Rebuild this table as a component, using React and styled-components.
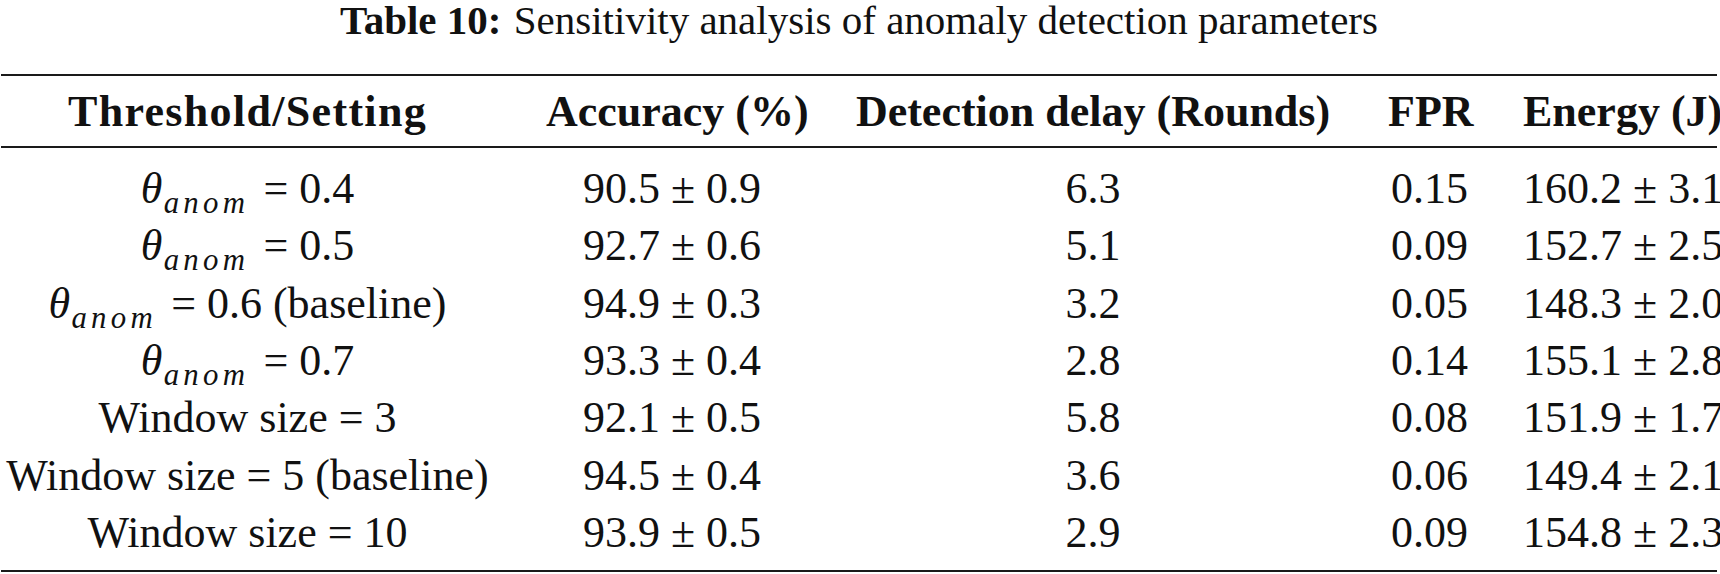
import styled, { createGlobalStyle } from 'styled-components'

const GlobalStyle = createGlobalStyle`
    html, body {
        margin: 0;
        padding: 0;
        background: #ffffff;
    }

    body {
        font-family: "Liberation Serif", "DejaVu Serif", serif;
        color: #111111;
    }
`

const Page = styled.div`
    width: 1716px;
    margin-left: 1px;
`

const Caption = styled.p`
    margin: 0 0 34px;
    height: 40px;
    line-height: 40px;
    font-size: 41px;
    text-align: center;
    white-space: nowrap;
`

const CaptionLabel = styled.span`
    font-weight: 700;
    margin-right: 0.3em;
`

const Head = styled.div`
    display: grid;
    grid-template-columns: 519px 304px 538px 135px 220px;
    height: 70px;
    align-items: center;
    border-top: 2px solid #1a1a1a;
    border-bottom: 2px solid #1a1a1a;
    font-size: 44px;
    font-weight: 700;
`

const Body = styled.div`
    padding: 12px 0 9px;
    border-bottom: 2px solid #1a1a1a;
`

const Row = styled.div`
    display: grid;
    grid-template-columns: 519px 304px 538px 135px 220px;
    height: 57.3px;
    align-items: center;
    font-size: 44px;
`

const Cell = styled.div`
    text-align: center;
    white-space: nowrap;
    line-height: 57px;
    letter-spacing: ${({ $wide }) => ($wide ? '0.03em' : 'normal')};
    padding: ${({ $first, $last }) => ($first ? '0 26px 0 0' : $last ? '0 3px 0 26px' : '0 26px')};
`

const Theta = styled.i`
    font-style: italic;
`

const Sub = styled.sub`
    font-style: italic;
    font-size: 0.7em;
    letter-spacing: 0.14em;
    line-height: 0;
    vertical-align: -0.32em;
    margin-left: 0.04em;
    margin-right: 0.1em;
`

const headers = ['Threshold/Setting', 'Accuracy (%)', 'Detection delay (Rounds)', 'FPR', 'Energy (J)']

const rows = [
    { theta: true, setting: '= 0.4', acc: '90.5 ± 0.9', delay: '6.3', fpr: '0.15', energy: '160.2 ± 3.1' },
    { theta: true, setting: '= 0.5', acc: '92.7 ± 0.6', delay: '5.1', fpr: '0.09', energy: '152.7 ± 2.5' },
    { theta: true, setting: '= 0.6 (baseline)', acc: '94.9 ± 0.3', delay: '3.2', fpr: '0.05', energy: '148.3 ± 2.0' },
    { theta: true, setting: '= 0.7', acc: '93.3 ± 0.4', delay: '2.8', fpr: '0.14', energy: '155.1 ± 2.8' },
    { setting: 'Window size = 3', acc: '92.1 ± 0.5', delay: '5.8', fpr: '0.08', energy: '151.9 ± 1.7' },
    { setting: 'Window size = 5 (baseline)', acc: '94.5 ± 0.4', delay: '3.6', fpr: '0.06', energy: '149.4 ± 2.1' },
    { setting: 'Window size = 10', acc: '93.9 ± 0.5', delay: '2.9', fpr: '0.09', energy: '154.8 ± 2.3' },
]

const App = () => {
    return (
        <>
            <GlobalStyle />
            <Page>
                <Caption>
                    <CaptionLabel>Table 10:</CaptionLabel>
                    Sensitivity analysis of anomaly detection parameters
                </Caption>

                <Head>
                    {headers.map((h, i) => (
                        <Cell key={h} $first={i === 0} $wide={i === 0} $last={i === headers.length - 1}>{h}</Cell>
                    ))}
                </Head>

                <Body>
                    {rows.map((r) => (
                        <Row key={r.setting + r.acc}>
                            <Cell $first>
                                {r.theta && (
                                    <>
                                        <Theta>θ</Theta>
                                        <Sub>anom</Sub>{' '}
                                    </>
                                )}
                                {r.setting}
                            </Cell>
                            <Cell>{r.acc}</Cell>
                            <Cell>{r.delay}</Cell>
                            <Cell>{r.fpr}</Cell>
                            <Cell $last>{r.energy}</Cell>
                        </Row>
                    ))}
                </Body>
            </Page>
        </>
    )
}

export default App
